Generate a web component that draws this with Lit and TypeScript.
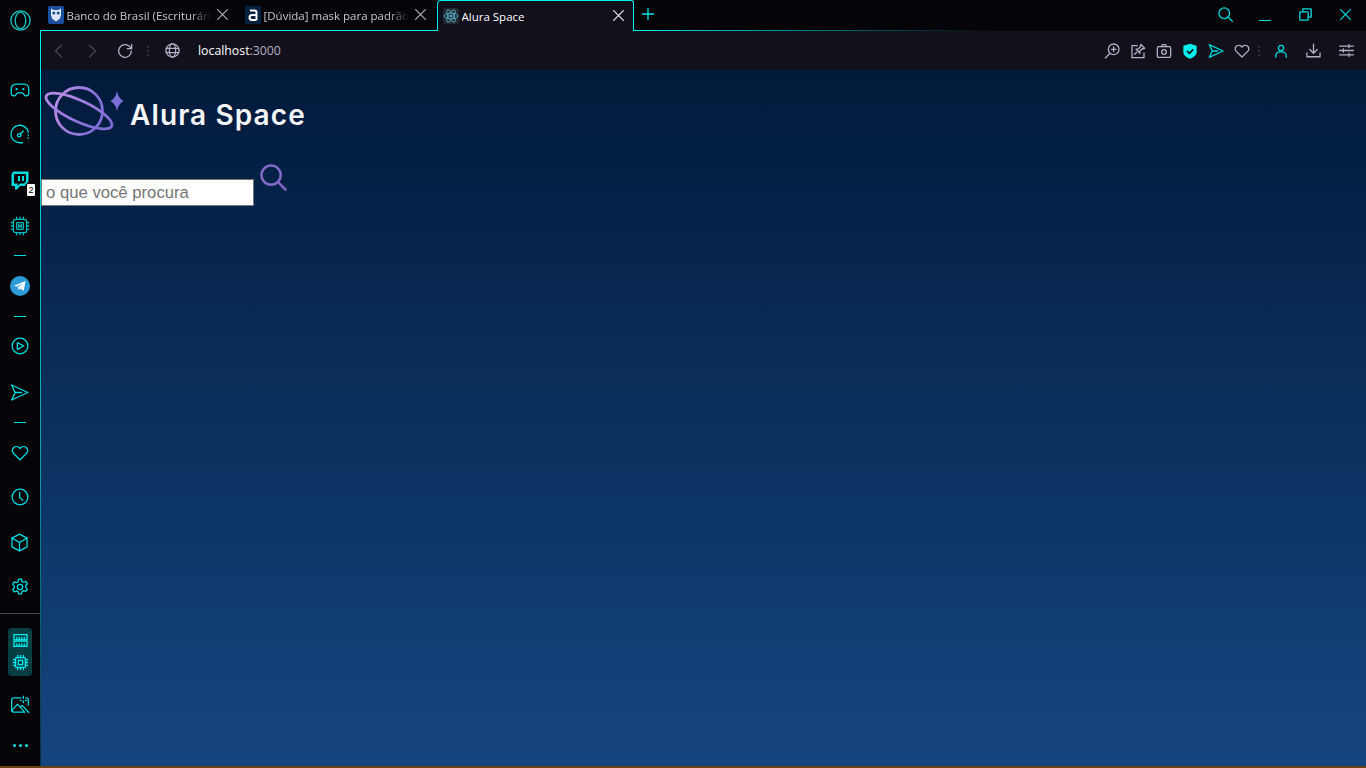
import { LitElement, html, css, svg } from "lit";
import { customElement } from "lit/decorators.js";

const ic = (size: number, body: unknown, cls = "") =>
  html`<svg class="ic ${cls}" width=${size} height=${size} viewBox="0 0 24 24" fill="none" stroke="currentColor" stroke-width=${(1.3 * 24) / size} stroke-linecap="round" stroke-linejoin="round">${body}</svg>`;

const send = svg`<path d="M2 2.500 22.500 12 2 21.500 6.500 12Z"/><path d="M6.500 12h8"/>`;
const heart = svg`<path d="M12 21 3.400 12.600a5.300 5.300 0 0 1 0-7.600 5.400 5.400 0 0 1 7.600 0L12 6l1-1a5.400 5.400 0 0 1 7.600 0 5.300 5.300 0 0 1 0 7.600Z"/>`;
const x = svg`<path d="M3 3l18 18M21 3 3 21"/>`;
const cpu = svg`<rect x="5" y="5" width="14" height="14" rx="1.500"/><rect x="9" y="9" width="6" height="6"/><path d="M8 2v3M12 2v3M16 2v3M8 19v3M12 19v3M16 19v3M2 8h3M2 12h3M2 16h3M19 8h3M19 12h3M19 16h3"/>`;

const sideIcons = [
  html`<div class="cell">${ic(20, svg`<path d="M7 5h10a5.500 5.500 0 0 1 5.500 5.500v5.500a3 3 0 0 1-5.400 1.800L15 15.500H9l-2.100 2.300A3 3 0 0 1 1.500 16v-5.500A5.500 5.500 0 0 1 7 5Z"/><circle cx="8" cy="11" r=".6"/><circle cx="16" cy="11" r=".6"/>`)}</div>`,
  html`<div class="cell">${ic(20, svg`<path d="M22 10A10.500 10.500 0 1 0 12 22.500h3"/><circle cx="11" cy="13.500" r="2"/><path d="M12.500 12 16 8.500M22 13v.5M22 16.500v.5"/>`)}</div>`,
  html`<div class="cell twitch">
      <svg class="ic" width="18" height="19" viewBox="0 0 18 19"><path fill="currentColor" fill-rule="evenodd" d="M2.500.5H17.500V10.500L13.500 15H9L6 18.500H4V15H.5V3ZM3 3V12.500H6.500V15L9 12.500H13L15 10.500V3Z"/><path fill="currentColor" d="M7 5h2v5H7zM11 5h2v5h-2z"/></svg>
      <span class="badge">2</span></div>`,
  html`<div class="cell">${ic(20, svg`<rect x="4" y="4" width="16" height="16" rx="3"/><rect x="8" y="8" width="8" height="8" rx="1"/><path d="M10.500 10v4M13.500 10v4M10.500 12h3M8 1.500V4M12 1.500V4M16 1.500V4M8 20v2.500M12 20v2.500M16 20v2.500M1.500 8H4M1.500 12H4M1.500 16H4M20 8h2.500M20 12h2.500M20 16h2.500"/>`, "dim")}</div>`,
  html`<div class="cell"><span class="sep"></span></div>`,
  html`<div class="cell"><svg class="ic" width="20" height="20" viewBox="0 0 20 20"><circle cx="10" cy="10" r="10" fill="#2a9bd8"/><path fill="#fff" d="M3.800 9.800 15.500 5 13.700 14.900 10.300 12.400 8.500 14.200 8.100 11.200 13 7 6.900 10.800Z"/></svg></div>`,
  html`<div class="cell"><span class="sep"></span></div>`,
  html`<div class="cell">${ic(18, svg`<circle cx="12" cy="12" r="10.500"/><path d="M8.500 7.500 17 12l-8.500 4.500Z"/>`)}</div>`,
  html`<div class="cell">${ic(19, send)}</div>`,
  html`<div class="cell"><span class="sep"></span></div>`,
  html`<div class="cell">${ic(18, heart)}</div>`,
  html`<div class="cell">${ic(18, svg`<circle cx="12" cy="12" r="10.500"/><path d="M11.500 6v6.500l4 3.500"/>`)}</div>`,
  html`<div class="cell">${ic(19, svg`<path d="M12 1.500 21.500 6.500v11L12 22.500l-9.500-5v-11Z"/><path d="M2.500 6.500 12 12l9.500-5.500M12 12v10.500"/>`)}</div>`,
  html`<div class="cell">${ic(18, svg`<circle cx="12" cy="12" r="3.500"/><path d="M10 1.500h4l.6 3 2.400 1.200 2.800-1.200 2 3.400-2.300 2 .1 2.600 2.200 2-2 3.400-2.800-1-2.400 1.300-.6 3h-4l-.6-3L7.100 17.500l-2.800 1-2-3.400 2.200-2v-2.600l-2.200-2 2-3.400 2.800 1.200 2.300-1.200Z"/>`)}</div>`,
  html`<div class="cell"><span class="rule"></span></div>`,
  html`<div class="cell"><div class="group">
      ${ic(15, svg`<rect x="1.500" y="2.500" width="21" height="8.500"/><rect x="1.500" y="13" width="21" height="8.500"/><path d="M6 7v4M10 7v4M14 7v4M18 7v4M6 17.500v4M10 17.500v4M14 17.500v4M18 17.500v4"/>`)}
      ${ic(17, cpu)}
    </div></div>`,
  html`<div class="cell">${ic(20, svg`<path d="M13 3.500H4.500A2.500 2.500 0 0 0 2 6v12a2.500 2.500 0 0 0 2.500 2.500H18"/><path d="M19 3.500h.5A2.500 2.500 0 0 1 22 6v6"/><path d="M2.500 18.500 9 11l8 9M12.500 14.500l2-2 8 8.500"/><path d="M16 1.500v2.500M16 7v2M12.500 6.500h1M18.500 6.500h1"/>`)}</div>`,
  html`<div class="cell"><div class="dots"><i></i><i></i><i></i></div></div>`,
];

const tabs = [
  { title: "Banco do Brasil (Escriturária", fav: html`<svg class="fav" width="16" height="18" viewBox="0 0 16 18"><rect width="16" height="18" rx="2" fill="#1c4fa0"/><path fill="#dfe9f7" d="M3 2.500 5.500 4h5L13 2.500V9l-1 3.500L8 15.500 4 12.500 3 9Z"/><circle cx="5.800" cy="7" r="1.500" fill="#1c4fa0"/><circle cx="10.200" cy="7" r="1.500" fill="#1c4fa0"/></svg>` },
  { title: "[Dúvida] mask para padrão", fav: html`<svg class="fav" width="16" height="18" viewBox="0 0 16 18"><rect width="16" height="18" fill="#04223f"/><path fill="none" stroke="#fff" stroke-width="2" d="M5 4.500h4.500a2 2 0 0 1 2 2V14M11.500 9H7a2.500 2.500 0 0 0 0 5h4.500"/></svg>` },
];

@customElement("app-root")
export class AppRoot extends LitElement {
  static styles = css`
    :host { display: flex; flex-direction: column; width: 1366px; height: 768px; overflow: hidden; background: #050509; font-family: "Open Sans", "Noto Sans", sans-serif; }
    .ic { display: block; flex: none; }
    .shell { flex: 1; display: flex; min-height: 0; }
    .bottom { height: 2px; flex: none; background: #6b4214; }

    aside { width: 40px; flex: none; color: #00dbe0; display: grid;
      grid-template-rows: 40px 28px 44px 44px 48px 44px 14px 48px 12px 48px 44px 16px 46px 42px 48px 42px 11px 66px 40px 41px; }
    .brand { display: flex; align-items: center; justify-content: center; color: #16c4c4; }
    .spacer { grid-row: 2; }
    .cell { display: flex; align-items: center; justify-content: center; padding-right: 1px; position: relative; }
    .dim { color: #00b8bc; }
    .sep { width: 12px; height: 1px; background: #00dbe0; margin-left: 1px; }
    .rule { width: 40px; height: 1px; background: #4a4a4e; margin-right: -1px; }
    .group { width: 24px; height: 48px; margin-left: 1px; border-radius: 4px; background: #063f43; color: #00f0f0; display: flex; flex-direction: column; align-items: center; justify-content: space-around; padding: 2px 0; box-sizing: border-box; }
    .dots { display: flex; gap: 3px; margin-left: 1px; }
    .dots i { width: 3px; height: 3px; border-radius: 50%; background: #00e8ea; }
    .badge { position: absolute; left: 27px; top: 28px; width: 8px; height: 12px; background: #fff; color: #000; font: 9px/12px "Liberation Sans", sans-serif; text-align: center; border-radius: 1px; }

    main { flex: 1; display: flex; flex-direction: column; min-width: 0; }
    .strip { height: 31px; flex: none; display: flex; }
    .tab { width: 197px; flex: none; box-sizing: border-box; border-bottom: 1px solid #00f0f0; display: flex; align-items: center; padding: 0 8px; color: #c6c6cc; font-size: 11.500px; height: 31px; }
    .tab:nth-child(2) { width: 200px; padding-right: 10px; }
    .tab .fav { flex: none; margin-right: 2.500px; }
    .tab .name { flex: 1; min-width: 0; white-space: nowrap; overflow: hidden; -webkit-mask-image: linear-gradient(90deg, #000 85%, transparent); mask-image: linear-gradient(90deg, #000 85%, transparent); }
    .tab .close { margin: 0 0 1px 4px; color: #a8a8ae; }
    .tab.active { background: #12101b; border: 1px solid #00f0f0; border-bottom: none; border-radius: 4px 3px 0 0; padding: 0 8px 0 5px; color: #fff; }
    .tab.active .close { color: #e8e8ec; }
    .tab.active .name { -webkit-mask-image: none; mask-image: none; }
    .rest { flex: 1; display: flex; align-items: flex-start; position: relative; }
    .rest::after { content: ""; position: absolute; left: 0; right: 0; bottom: 0; height: 1px; background: linear-gradient(90deg, #00f0f0, transparent 360px); }
    .plus { color: #00e8ea; margin: 8px 0 0 8px; }
    .winbtns { margin-left: auto; display: flex; align-items: flex-start; color: #00d8dc; height: 30px; padding-right: 14px; }
    .wsearch { margin: 7px 26px 0 0; }
    .wmin { width: 12px; height: 1px; margin: 20px 28px 0 0; background: #00d8dc; }
    .wres { margin: 8px 27px 0 0; }
    .wclose { margin-top: 8px; }

    .frame { flex: 1; display: flex; flex-direction: column; min-height: 0; border-left: 1px solid; border-image: linear-gradient(180deg, #00f0f0, #0a9ea0 60%, #0a2c38) 1; }
    .toolbar { height: 39px; flex: none; background: #12101b; display: flex; align-items: center; color: #b6aec6; padding-left: 11px; box-sizing: border-box; }
    .nav-dim { color: #4a4754; }
    .toolbar .back { margin-right: 19px; }
    .toolbar .fwd { margin-right: 18px; }
    .toolbar .reload { margin-right: 14px; }
    .vdots { display: flex; flex-direction: column; gap: 2px; }
    .vdots i { width: 2px; height: 2px; background: #2f2d38; }
    .toolbar .vdots.a { margin-right: 16px; }
    .toolbar .globe { margin-right: 18px; }
    .url { font-size: 12.300px; color: #fff; margin-bottom: 1px; }
    .url span { color: #b6aec6; }
    .tools { margin-left: auto; display: flex; align-items: center; gap: 10px; padding-right: 12px; }
    .tools .cy { color: #00d8dc; }
    .tools .shield { color: #00f0f0; }
    .tools .vdots { margin-left: -2px; }
    .tools .user { margin-left: 4px; }
    .tools .dl { margin-left: 8px; }
    .tools .sl { margin-left: 8px; }

    .page { flex: 1; min-height: 0; background: linear-gradient(180deg, #011a3b 0%, #154580 100%); padding: 15px 0 0; box-sizing: border-box; }
    .logo { display: flex; align-items: center; height: 52px; padding-left: 3px; }
    .logotxt { color: #f4f6fa; font: 600 28px/1 "Inter", "Open Sans", sans-serif; letter-spacing: 1.100px; margin: 8px 0 0 6px; white-space: nowrap; }
    .logosvg { filter: blur(.3px); }
    .star { margin: 0 0 20px -14px; }
    .search { display: flex; margin-top: 27px; align-items: flex-end; gap: 6px; height: 42px; }
    input { width: 213px; height: 27px; box-sizing: border-box; border: 1px solid #767676; background: #fff; padding: 1px 4px; margin: 0; font: 16.700px "Liberation Sans", Arial, sans-serif; color: #222; outline: none; border-radius: 0; }
    input::placeholder { color: #757575; opacity: 1; }
    .lens { align-self: flex-start; }
  `;

  private tab(t: { title: string; fav: unknown }) {
    return html`<div class="tab">${t.fav}<span class="name">${t.title}</span>${ic(13, x, "close")}</div>`;
  }

  render() {
    return html`
      <div class="shell">
      <aside>
        <div class="brand">
          <svg class="ic" width="21" height="21" viewBox="0 0 24 24" fill="none" stroke="currentColor" stroke-width="1.500"><circle cx="12" cy="12" r="11"/><ellipse cx="12" cy="12" rx="6" ry="9.500"/></svg>
        </div>
        <div class="spacer"></div>
        ${sideIcons}
      </aside>
      <main>
        <div class="strip">
          ${tabs.map((t) => this.tab(t))}
          <div class="tab active">
            <svg class="fav" width="16" height="16" viewBox="-12 -12 24 24" fill="none" stroke="#58c4dc" stroke-width="1.100"><rect x="-12" y="-12" width="24" height="24" rx="3" fill="#23272f" stroke="none"/><circle r="2" fill="#58c4dc" stroke="none"/><ellipse rx="10.500" ry="4.200"/><ellipse rx="10.500" ry="4.200" transform="rotate(60)"/><ellipse rx="10.500" ry="4.200" transform="rotate(120)"/></svg>
            <span class="name">Alura Space</span>${ic(13, x, "close")}
          </div>
          <div class="rest">
            ${ic(12, svg`<path d="M12 1v22M1 12h22"/>`, "plus")}
            <div class="winbtns">
              ${ic(15, svg`<circle cx="10" cy="10" r="8.500"/><path d="M16.500 16.500l6.500 6.500"/>`, "wsearch")}
              <span class="wmin"></span>
              ${ic(13, svg`<rect x="1.500" y="7" width="15.500" height="15.500" rx="1"/><path d="M7 7V2.500a1 1 0 0 1 1-1h13.500a1 1 0 0 1 1 1V16a1 1 0 0 1-1 1H17"/>`, "wres")}
              ${ic(13, x, "wclose")}
            </div>
          </div>
        </div>
        <div class="frame">
          <div class="toolbar">
            ${ic(14, svg`<path d="M16 2 6 12l10 10"/>`, "nav-dim back")}
            ${ic(14, svg`<path d="M8 2l10 10L8 22"/>`, "nav-dim fwd")}
            ${ic(16, svg`<path d="M21.500 12A9.500 9.500 0 1 1 18.500 5L21.500 8"/><path d="M22 2v6.500h-6.500"/>`, "reload")}
            <div class="vdots a"><i></i><i></i><i></i></div>
            ${ic(15, svg`<circle cx="12" cy="12" r="10.500"/><ellipse cx="12" cy="12" rx="5" ry="10.500"/><path d="M2 8.500h20M2 15.500h20"/>`, "globe")}
            <span class="url">localhost<span>:3000</span></span>
            <div class="tools">
              ${ic(16, svg`<circle cx="14.500" cy="9.500" r="8"/><path d="M9 15.500 2 22.500M14.500 6v7M11 9.500h7"/>`)}
              ${ic(16, svg`<path d="M11 4H3v18h18v-7"/><path d="M16 2l6 6-4 1-3.500 3.500.5 3-6-6 3-.5L15.500 6Z"/><path d="M10 14l-3 3"/>`)}
              ${ic(16, svg`<rect x="2" y="5.500" width="20" height="16" rx="2"/><circle cx="12" cy="13.500" r="3.500"/><path d="M8 5.500 9.500 2.500h5L16 5.500"/>`)}
              <svg class="ic shield" width="16" height="16" viewBox="0 0 24 24"><path fill="currentColor" d="M12 1 22 4v9c0 5-4 8.500-10 10.500C6 21.500 2 18 2 13V4Z"/><path fill="none" stroke="#12101b" stroke-width="2.600" d="M7.500 12l3.500 3.500 6-6"/></svg>
              ${ic(16, send, "cy")}
              ${ic(16, heart)}
              <div class="vdots"><i></i><i></i><i></i></div>
              ${ic(14, svg`<circle cx="12" cy="7" r="4.500"/><path d="M3 22.500v-2a7 7 0 0 1 7-7h4a7 7 0 0 1 7 7v2"/>`, "cy user")}
              ${ic(15, svg`<path d="M12 2v14M6 10.500l6 6 6-6M1.500 16v6h21v-6"/>`, "dl")}
              ${ic(15, svg`<path d="M1 5h22M1 12h22M1 19h22M16 2.500v5M7 9.500v5M16 16.500v5"/>`, "sl")}
            </div>
          </div>
          <div class="page">
            <div class="logo">
              <svg class="logosvg" width="80" height="52" viewBox="0 0 80 52" fill="none">
                <defs>
                  <linearGradient id="lg" x1="0" y1="0" x2="1" y2="0.300"><stop offset="0" stop-color="#bb8fe6"/><stop offset="1" stop-color="#7f6cd6"/></linearGradient>
                </defs>
                <circle cx="35" cy="26" r="23.500" stroke="url(#lg)" stroke-width="2.800"/>
                <ellipse cx="35" cy="26" rx="36" ry="10.500" transform="rotate(25 35 26)" stroke="url(#lg)" stroke-width="2.800"/>
              </svg>
              <svg class="star" width="14" height="22" viewBox="0 0 14 22"><path fill="#7a6fd8" d="M7 1c1 5 3 8 6.500 10C10 13 8 16 7 21 6 16 4 13 .5 11 4 9 6 6 7 1Z"/></svg>
              <span class="logotxt">Alura Space</span>
            </div>
            <div class="search">
              <input type="text" placeholder="o que você procura" />
              <svg class="lens" width="27" height="27" viewBox="0 0 28 28" fill="none" stroke="#8268c8" stroke-width="2.600" stroke-linecap="round"><circle cx="11.500" cy="11.500" r="10"/><path d="M19 19l7.500 7.500"/></svg>
            </div>
          </div>
        </div>
      </main>
      </div>
      <div class="bottom"></div>
    `;
  }
}
